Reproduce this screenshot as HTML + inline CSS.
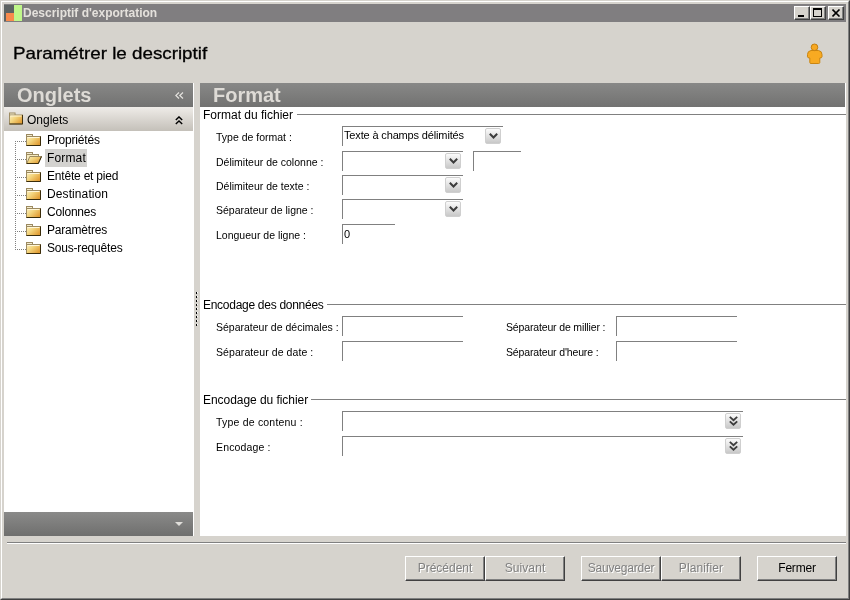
<!DOCTYPE html>
<html><head><meta charset="utf-8">
<style>
*{box-sizing:border-box;margin:0;padding:0}
html,body{width:850px;height:600px;overflow:hidden;background:#d6d3cd;font-family:"Liberation Sans",sans-serif;font-size:11px;color:#000}
div{position:absolute}
.t{white-space:nowrap;line-height:1;will-change:transform}
.tb{top:2px;width:16px;height:14px;background:#d6d3cd;border-top:1px solid #fff;border-left:1px solid #fff;border-right:1px solid #404040;border-bottom:1px solid #404040}
.tb:after{content:"";position:absolute;left:0;top:0;right:0;bottom:0;border-right:1px solid #808080;border-bottom:1px solid #808080}
.ph{top:83px;height:24px;background:linear-gradient(#888887,#727271)}
.ph .t{font-size:20px;font-weight:bold;color:#dedbd6;top:2px;letter-spacing:0px}
.tree{left:47px;font-size:12px;letter-spacing:-0.2px}
.lbl{font-size:10.5px;left:216px}
.gt{font-size:12px;left:203px}
.gl{height:1px;background:#808080;right:4px}
.inp{height:20px;border-left:1px solid #808080;border-top:1px solid #808080}
.dd{width:16px;height:16px;border:1px solid #cfcfcf;border-radius:2px;background:linear-gradient(#fbfbfb,#c8c8c8)}
.btn{top:556px;height:25px;width:80px;background:#d6d3cd;border-top:1px solid #fff;border-left:1px solid #fff;border-right:1px solid #404040;border-bottom:1px solid #404040}
.btn:after{content:"";position:absolute;left:0;top:0;right:0;bottom:0;border-right:1px solid #808080;border-bottom:1px solid #808080}
.btn .t{font-size:12px;width:100%;text-align:center;top:5px;left:0;letter-spacing:-0.2px}
.dis .t{color:#808080;text-shadow:1px 1px 0 #fff}
.folder{width:15px;height:12px}
.dot{width:1px;height:1px;background:#000}
</style></head><body>
<svg width="0" height="0" style="position:absolute"><defs>
  <linearGradient id="fg" x1="0" y1="0" x2="1" y2="0.7"><stop offset="0" stop-color="#fbf0c4"/><stop offset="0.45" stop-color="#f3d47c"/><stop offset="1" stop-color="#e19c34"/></linearGradient>
  <g id="foldc"><rect x="0.5" y="0.5" width="6" height="3" fill="#f3ecd0" stroke="#9c8a60"/><rect x="0.5" y="2.5" width="14" height="9" fill="url(#fg)" stroke="#9c8a60"/><path d="M0.5 11.5 H14.5 V2.5" stroke="#3a2c0a" fill="none"/><path d="M1.5 3.5 H13.5" stroke="#fff6d8" /></g>
  <g id="foldo"><rect x="0.5" y="0.5" width="6" height="3" fill="#f3ecd0" stroke="#9c8a60"/><rect x="0.5" y="2.5" width="12" height="9" fill="#f6ebc0" stroke="#9c8a60"/><path d="M0.8 11.5 L3.8 4.5 L15.5 4.5 L12.3 11.5 Z" fill="url(#fg)" stroke="#9c8a60"/><path d="M0.8 11.5 H12.3 L15.5 4.5" stroke="#3a2c0a" fill="none"/></g>
</defs></svg>
<!-- window frame -->
<div style="left:0;top:0;width:850px;height:600px;border-top:1px solid #d6d3cd;border-left:1px solid #d6d3cd;border-right:1px solid #404040;border-bottom:1px solid #404040"></div>
<div style="left:1px;top:1px;width:848px;height:598px;border-top:1px solid #fff;border-left:1px solid #fff;border-right:1px solid #808080;border-bottom:1px solid #808080"></div>

<!-- title bar -->
<div style="left:4px;top:4px;width:842px;height:18px;background:#807e80">
  <div style="left:0;top:1px;width:10px;height:16px;background:#5d6262"></div>
  <div style="left:2px;top:9px;width:8px;height:8px;background:#f88a4c"></div>
  <div style="left:10px;top:1px;width:8px;height:16px;background:#c0f78a"></div>
  <div class="t" style="left:19px;top:3px;font-weight:bold;font-size:12px;color:#e4e1dc">Descriptif d'exportation</div>
  <div class="tb" style="left:790px"><div style="left:3px;top:8px;width:6px;height:2px;background:#000"></div></div>
  <div class="tb" style="left:806px"><div style="left:2px;top:1px;width:9px;height:9px;border:1px solid #000;border-top-width:2px"></div></div>
  <div class="tb" style="left:824px"><svg style="position:absolute;left:3px;top:2px" width="9" height="8" viewBox="0 0 9 8"><path d="M0.5 0.5 L7.5 7.5 M7.5 0.5 L0.5 7.5" stroke="#000" stroke-width="1.6" fill="none"/></svg></div>
</div>

<!-- header -->
<div class="t" style="left:13px;top:45px;font-size:17px;letter-spacing:0px;color:#000;-webkit-text-stroke:0.3px #000;transform:scaleX(1.105);transform-origin:0 0">Paramétrer le descriptif</div>
<svg style="position:absolute;left:806px;top:43px" width="18" height="22" viewBox="0 0 18 22">
  <path d="M5 7.5 Q1.5 8 1.5 11.5 L1.5 13.8 Q1.5 15 3.8 15 L3.8 19.5 Q3.8 20.5 5 20.5 L12.5 20.5 Q13.8 20.5 13.8 19.5 L13.8 15 Q16 15 16 13.8 L16 11.5 Q16 8 12.5 7.5 Z" fill="#f8aa22" stroke="#c98512" stroke-width="1"/>
  <circle cx="8.5" cy="4.3" r="3.3" fill="#f7a822" stroke="#c47f10" stroke-width="1"/>
</svg>

<!-- left panel -->
<div style="left:4px;top:83px;width:190px;height:453px;background:#fff"></div>
<div class="ph" style="left:4px;width:189px"><div class="t" style="left:13px">Onglets</div>
  <svg style="position:absolute;left:171px;top:9px" width="9" height="8" viewBox="0 0 9 8"><path d="M4 0.5 L0.8 3.5 L4 6.5 M8 0.5 L4.8 3.5 L8 6.5" stroke="#e4e2de" stroke-width="1.2" fill="none"/></svg>
</div>
<div style="left:4px;top:107px;width:189px;height:24px;background:linear-gradient(#efece8,#c4c0b9)">
  <svg style="position:absolute;left:5px;top:4.5px" width="14" height="13" viewBox="0 0 15 13" preserveAspectRatio="none"><use href="#foldc" y="0.5"/></svg>
  <div class="t" style="left:23px;top:7px;font-size:12px">Onglets</div>
  <svg style="position:absolute;left:171px;top:8.7px" width="8" height="9" viewBox="0 0 8 9"><path d="M0.8 3.9 L4 0.9 L7.2 3.9 M0.8 7.9 L4 4.9 L7.2 7.9" stroke="#000" stroke-width="1.4" fill="none"/></svg>
</div>

<!-- tree lines -->
<svg style="position:absolute;left:15px;top:141px" width="12" height="110" shape-rendering="crispEdges"><g fill="#808080"><rect x="0" y="0" width="1" height="1"/><rect x="0" y="2" width="1" height="1"/><rect x="0" y="4" width="1" height="1"/><rect x="0" y="6" width="1" height="1"/><rect x="0" y="8" width="1" height="1"/><rect x="0" y="10" width="1" height="1"/><rect x="0" y="12" width="1" height="1"/><rect x="0" y="14" width="1" height="1"/><rect x="0" y="16" width="1" height="1"/><rect x="0" y="18" width="1" height="1"/><rect x="0" y="20" width="1" height="1"/><rect x="0" y="22" width="1" height="1"/><rect x="0" y="24" width="1" height="1"/><rect x="0" y="26" width="1" height="1"/><rect x="0" y="28" width="1" height="1"/><rect x="0" y="30" width="1" height="1"/><rect x="0" y="32" width="1" height="1"/><rect x="0" y="34" width="1" height="1"/><rect x="0" y="36" width="1" height="1"/><rect x="0" y="38" width="1" height="1"/><rect x="0" y="40" width="1" height="1"/><rect x="0" y="42" width="1" height="1"/><rect x="0" y="44" width="1" height="1"/><rect x="0" y="46" width="1" height="1"/><rect x="0" y="48" width="1" height="1"/><rect x="0" y="50" width="1" height="1"/><rect x="0" y="52" width="1" height="1"/><rect x="0" y="54" width="1" height="1"/><rect x="0" y="56" width="1" height="1"/><rect x="0" y="58" width="1" height="1"/><rect x="0" y="60" width="1" height="1"/><rect x="0" y="62" width="1" height="1"/><rect x="0" y="64" width="1" height="1"/><rect x="0" y="66" width="1" height="1"/><rect x="0" y="68" width="1" height="1"/><rect x="0" y="70" width="1" height="1"/><rect x="0" y="72" width="1" height="1"/><rect x="0" y="74" width="1" height="1"/><rect x="0" y="76" width="1" height="1"/><rect x="0" y="78" width="1" height="1"/><rect x="0" y="80" width="1" height="1"/><rect x="0" y="82" width="1" height="1"/><rect x="0" y="84" width="1" height="1"/><rect x="0" y="86" width="1" height="1"/><rect x="0" y="88" width="1" height="1"/><rect x="0" y="90" width="1" height="1"/><rect x="0" y="92" width="1" height="1"/><rect x="0" y="94" width="1" height="1"/><rect x="0" y="96" width="1" height="1"/><rect x="0" y="98" width="1" height="1"/><rect x="0" y="100" width="1" height="1"/><rect x="0" y="102" width="1" height="1"/><rect x="0" y="104" width="1" height="1"/><rect x="0" y="106" width="1" height="1"/><rect x="0" y="108" width="1" height="1"/><rect x="2" y="0" width="1" height="1"/><rect x="4" y="0" width="1" height="1"/><rect x="6" y="0" width="1" height="1"/><rect x="8" y="0" width="1" height="1"/><rect x="10" y="0" width="1" height="1"/><rect x="2" y="18" width="1" height="1"/><rect x="4" y="18" width="1" height="1"/><rect x="6" y="18" width="1" height="1"/><rect x="8" y="18" width="1" height="1"/><rect x="10" y="18" width="1" height="1"/><rect x="2" y="36" width="1" height="1"/><rect x="4" y="36" width="1" height="1"/><rect x="6" y="36" width="1" height="1"/><rect x="8" y="36" width="1" height="1"/><rect x="10" y="36" width="1" height="1"/><rect x="2" y="54" width="1" height="1"/><rect x="4" y="54" width="1" height="1"/><rect x="6" y="54" width="1" height="1"/><rect x="8" y="54" width="1" height="1"/><rect x="10" y="54" width="1" height="1"/><rect x="2" y="72" width="1" height="1"/><rect x="4" y="72" width="1" height="1"/><rect x="6" y="72" width="1" height="1"/><rect x="8" y="72" width="1" height="1"/><rect x="10" y="72" width="1" height="1"/><rect x="2" y="90" width="1" height="1"/><rect x="4" y="90" width="1" height="1"/><rect x="6" y="90" width="1" height="1"/><rect x="8" y="90" width="1" height="1"/><rect x="10" y="90" width="1" height="1"/><rect x="2" y="108" width="1" height="1"/><rect x="4" y="108" width="1" height="1"/><rect x="6" y="108" width="1" height="1"/><rect x="8" y="108" width="1" height="1"/><rect x="10" y="108" width="1" height="1"/></g></svg>
<!-- folders -->
<svg style="position:absolute;left:26px;top:134px" width="16" height="120" viewBox="0 0 16 120">
  <use href="#foldc" y="0"/><use href="#foldo" y="18"/><use href="#foldc" y="36"/><use href="#foldc" y="54"/><use href="#foldc" y="72"/><use href="#foldc" y="90"/><use href="#foldc" y="108"/>
</svg>
<div style="left:45px;top:149px;width:42px;height:18px;background:#d3d2cf"></div>
<div class="t tree" style="top:134px">Propriétés</div>
<div class="t tree" style="top:152px;letter-spacing:0.15px">Format</div>
<div class="t tree" style="top:170px">Entête et pied</div>
<div class="t tree" style="top:188px;letter-spacing:0.1px">Destination</div>
<div class="t tree" style="top:206px">Colonnes</div>
<div class="t tree" style="top:224px">Paramètres</div>
<div class="t tree" style="top:242px">Sous-requêtes</div>

<div style="left:4px;top:512px;width:189px;height:24px;background:linear-gradient(#8a8a89,#6f6f6e)">
  <svg style="position:absolute;left:171px;top:10px" width="8" height="5" viewBox="0 0 8 5"><path d="M0 0 L8 0 L4 4 Z" fill="#e0deda"/></svg>
</div>

<!-- splitter grip -->
<svg style="position:absolute;left:196px;top:292px" width="2" height="36" viewBox="0 0 2 36" shape-rendering="crispEdges"><rect x="0" y="0" width="1" height="2" fill="#000"/><rect x="1" y="0" width="1" height="1" fill="#fff"/><rect x="0" y="4" width="1" height="2" fill="#000"/><rect x="1" y="4" width="1" height="1" fill="#fff"/><rect x="0" y="8" width="1" height="2" fill="#000"/><rect x="1" y="8" width="1" height="1" fill="#fff"/><rect x="0" y="12" width="1" height="2" fill="#000"/><rect x="1" y="12" width="1" height="1" fill="#fff"/><rect x="0" y="16" width="1" height="2" fill="#000"/><rect x="1" y="16" width="1" height="1" fill="#fff"/><rect x="0" y="20" width="1" height="2" fill="#000"/><rect x="1" y="20" width="1" height="1" fill="#fff"/><rect x="0" y="24" width="1" height="2" fill="#000"/><rect x="1" y="24" width="1" height="1" fill="#fff"/><rect x="0" y="28" width="1" height="2" fill="#000"/><rect x="1" y="28" width="1" height="1" fill="#fff"/><rect x="0" y="32" width="1" height="2" fill="#000"/><rect x="1" y="32" width="1" height="1" fill="#fff"/></svg>

<!-- right panel -->
<div style="left:200px;top:83px;width:646px;height:453px;background:#fff"></div>
<div class="ph" style="left:200px;width:645px"><div class="t" style="left:13px">Format</div></div>

<div class="t gt" style="top:109px;letter-spacing:0px">Format du fichier</div>
<div class="gl" style="left:297px;top:114px;width:549px"></div>
<div class="t lbl" style="top:132px">Type de format :</div>
<div class="t lbl" style="top:157px">Délimiteur de colonne :</div>
<div class="t lbl" style="top:181px">Délimiteur de texte :</div>
<div class="t lbl" style="top:205px">Séparateur de ligne :</div>
<div class="t lbl" style="top:230px">Longueur de ligne :</div>

<div class="inp" style="left:342px;top:126px;width:161px"><div class="t" style="left:1px;top:3px;font-size:11px;letter-spacing:-0.15px">Texte à champs délimités</div></div>
<div class="dd" style="left:485px;top:128px"><svg style="position:absolute;left:3px;top:4px" width="9" height="6" viewBox="0 0 9 6"><path d="M0.8 0.8 L4.5 4.5 L8.2 0.8" stroke="#3c3c3c" stroke-width="2" fill="none"/></svg></div>
<div class="inp" style="left:342px;top:151px;width:121px"></div>
<div class="dd" style="left:445px;top:153px"><svg style="position:absolute;left:3px;top:4px" width="9" height="6" viewBox="0 0 9 6"><path d="M0.8 0.8 L4.5 4.5 L8.2 0.8" stroke="#3c3c3c" stroke-width="2" fill="none"/></svg></div>
<div class="inp" style="left:473px;top:151px;width:48px"></div>
<div class="inp" style="left:342px;top:175px;width:121px"></div>
<div class="dd" style="left:445px;top:177px"><svg style="position:absolute;left:3px;top:4px" width="9" height="6" viewBox="0 0 9 6"><path d="M0.8 0.8 L4.5 4.5 L8.2 0.8" stroke="#3c3c3c" stroke-width="2" fill="none"/></svg></div>
<div class="inp" style="left:342px;top:199px;width:121px"></div>
<div class="dd" style="left:445px;top:201px"><svg style="position:absolute;left:3px;top:4px" width="9" height="6" viewBox="0 0 9 6"><path d="M0.8 0.8 L4.5 4.5 L8.2 0.8" stroke="#3c3c3c" stroke-width="2" fill="none"/></svg></div>
<div class="inp" style="left:342px;top:224px;width:53px"><div class="t" style="left:1px;top:4px;font-size:11px">0</div></div>

<div class="t gt" style="top:299px;letter-spacing:-0.28px">Encodage des données</div>
<div class="gl" style="left:327px;top:304px;width:519px"></div>
<div class="t lbl" style="top:322px">Séparateur de décimales :</div>
<div class="t lbl" style="top:347px;letter-spacing:0.08px">Séparateur de date :</div>
<div class="inp" style="left:342px;top:316px;width:121px"></div>
<div class="inp" style="left:342px;top:341px;width:121px"></div>
<div class="t lbl" style="top:322px;left:506px;letter-spacing:-0.15px">Séparateur de millier :</div>
<div class="t lbl" style="top:347px;left:506px;letter-spacing:-0.15px">Séparateur d'heure :</div>
<div class="inp" style="left:616px;top:316px;width:121px"></div>
<div class="inp" style="left:616px;top:341px;width:121px"></div>

<div class="t gt" style="top:394px;letter-spacing:-0.05px">Encodage du fichier</div>
<div class="gl" style="left:311px;top:399px;width:535px"></div>
<div class="t lbl" style="top:417px;letter-spacing:0.2px">Type de contenu :</div>
<div class="t lbl" style="top:442px;letter-spacing:0.15px">Encodage :</div>
<div class="inp" style="left:342px;top:411px;width:401px"></div>
<div class="dd" style="left:725px;top:413px"><svg style="position:absolute;left:3px;top:2px" width="9" height="10" viewBox="0 0 9 10"><path d="M0.8 0.8 L4.5 4.2 L8.2 0.8 M0.8 5.3 L4.5 8.7 L8.2 5.3" stroke="#3c3c3c" stroke-width="1.8" fill="none"/></svg></div>
<div class="inp" style="left:342px;top:436px;width:401px"></div>
<div class="dd" style="left:725px;top:438px"><svg style="position:absolute;left:3px;top:2px" width="9" height="10" viewBox="0 0 9 10"><path d="M0.8 0.8 L4.5 4.2 L8.2 0.8 M0.8 5.3 L4.5 8.7 L8.2 5.3" stroke="#3c3c3c" stroke-width="1.8" fill="none"/></svg></div>

<!-- bottom separator -->
<div style="left:7px;top:542px;width:839px;height:1px;background:#808080"></div>
<div style="left:7px;top:543px;width:839px;height:1px;background:#fff"></div>

<div class="btn dis" style="left:405px"><div class="t" style="letter-spacing:0px">Précédent</div></div>
<div class="btn dis" style="left:485px"><div class="t" style="letter-spacing:0.1px">Suivant</div></div>
<div class="btn dis" style="left:581px"><div class="t">Sauvegarder</div></div>
<div class="btn dis" style="left:661px"><div class="t" style="letter-spacing:0.1px">Planifier</div></div>
<div class="btn" style="left:757px"><div class="t">Fermer</div></div>
</body></html>
